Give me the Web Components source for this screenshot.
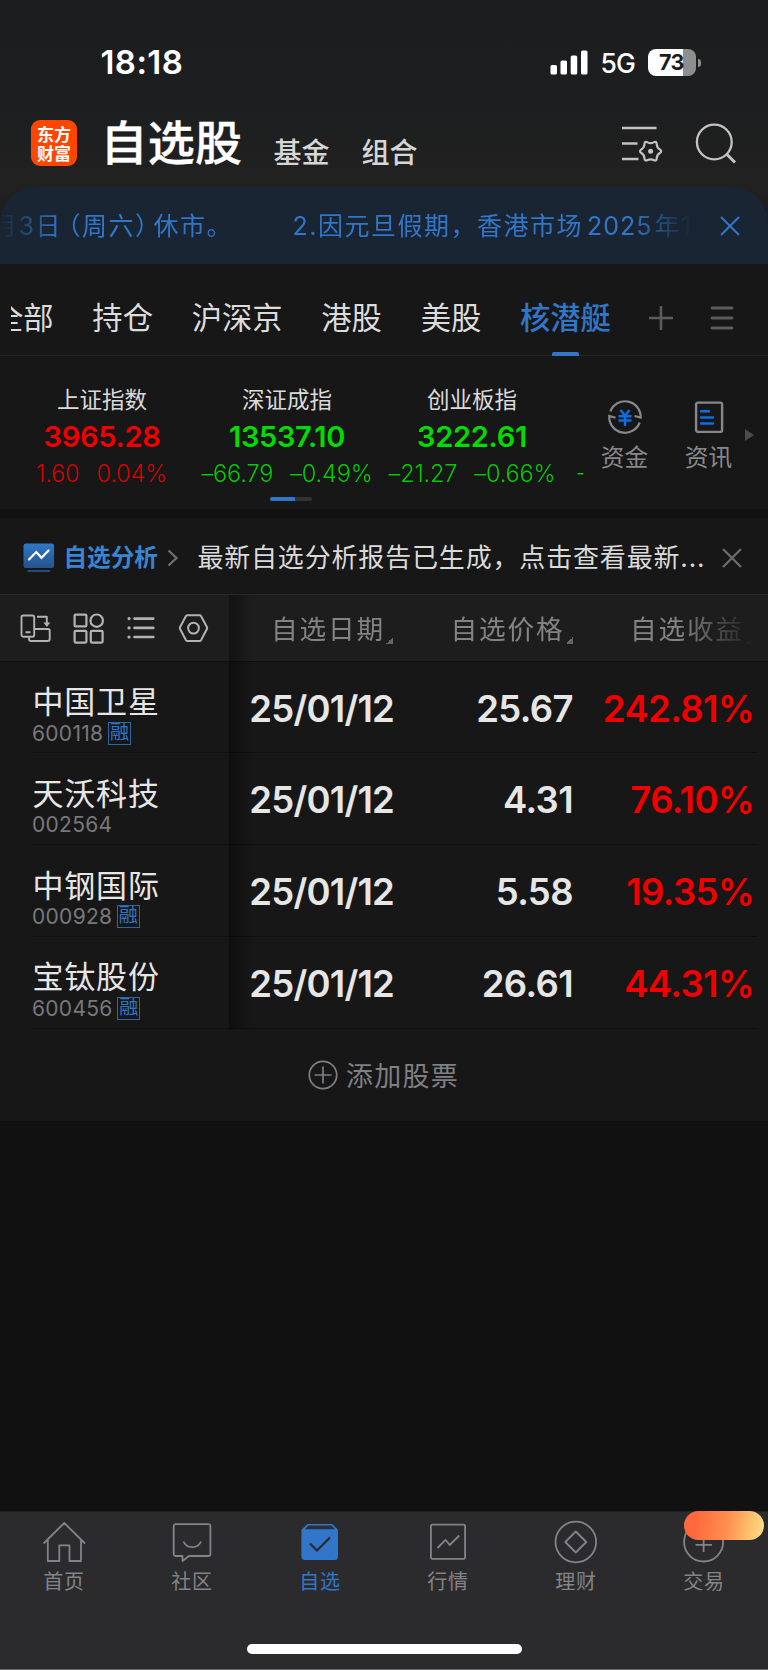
<!DOCTYPE html>
<html lang="zh-CN">
<head>
<meta charset="UTF-8">
<meta name="viewport" content="width=device-width, initial-scale=1">
<title>自选股</title>
<style>
  body {
    margin: 0;
    background: #111111;
    color: #e6e6e6;
    font-family: Inter, 'Noto Sans CJK SC', sans-serif;
    --c-blue: #3176c8;
    --c-red: #f00000;
    --c-green: #00dc00;
    --c-panel: #171717;
    --c-muted: #88888c;
  }
</style>
</head>
<body>
<watch-app></watch-app>

<script>
const ICONS = {
    filter: { w: 42, h: 42, svg: `<g fill="none" stroke="#c4c2c2" stroke-width="2.6"><path d="M1 5H35.500M1 20.500H16.500M1 36H17.500"/><path transform="translate(29.600 28.200) scale(.96)" stroke-width="2.300" d="M9.550 1.900Q6.600 3.800 6.400 7.300Q6.250 10.800 3.100 9.200Q0 7.600 -3.100 9.200Q-6.250 10.800 -6.400 7.300Q-6.600 3.800 -9.550 1.900Q-12.500 0 -9.550 -1.900Q-6.600 -3.800 -6.400 -7.300Q-6.250 -10.800 -3.100 -9.200Q0 -7.600 3.100 -9.200Q6.250 -10.800 6.400 -7.300Q6.600 -3.800 9.550 -1.900Q12.500 0 9.550 1.900Z"/></g><circle cx="29.600" cy="28.200" r="2.500" fill="#c4c2c2"/>` },
    search: { w: 42, h: 42, svg: `<g fill="none" stroke="#c4c2c2" stroke-width="2.300"><circle cx="19.300" cy="19" r="17.400"/><path stroke-width="3" d="M31.500 31L40 39.500"/></g>` },
    close: { w: 20, h: 20, svg: `<path d="M1 1L19 19M19 1L1 19" fill="none" stroke="currentColor" stroke-width="var(--sw, 2)"/>` },
    plus: { w: 26, h: 26, svg: `<path d="M13 1V25M1 13H25" fill="none" stroke="#5c5c5c" stroke-width="2.600"/>` },
    menu: { w: 24, h: 24, svg: `<path d="M2 2H22M2 12H22M2 22H22" fill="none" stroke="#5c5c5c" stroke-width="2.800" stroke-linecap="round"/>` },
    funds: { w: 36, h: 36, svg: `<g fill="none" stroke="#87878b" stroke-width="2.200"><path d="M3.300 12.500A15.700 15.700 0 0 1 33.700 18.500L27.500 17"/><path d="M32.700 23.500A15.700 15.700 0 0 1 2.300 17L8.500 18.700"/></g><path d="M13.500 11L18 16.500L22.500 11M11.500 17.300H24.500M11.500 21.500H24.500M18 16V27" fill="none" stroke="#0a6ee6" stroke-width="2.400"/>` },
    news: { w: 30, h: 34, svg: `<rect x="2.100" y="2.600" width="26" height="29.300" rx="2" fill="none" stroke="#87878b" stroke-width="2.400"/><path d="M7 11.200H15M7 17.500H19M7 23.500H19" fill="none" stroke="#0a6ee6" stroke-width="2.400" stroke-linecap="round"/>` },
    analysis: { w: 32, h: 30, svg: `<defs><linearGradient id="g" x1="0" y1="0" x2="0" y2="1"><stop offset="0" stop-color="#2f78c8"/><stop offset="1" stop-color="#26528a"/></linearGradient></defs><rect x=".5" y=".5" width="30.600" height="24.500" rx="2.500" fill="url(#g)"/><path d="M6 16.500L13.300 9L18.500 14.800L25.500 7.500" fill="none" stroke="#fff" stroke-width="2.200" stroke-linecap="round"/><path d="M5.500 28H26.500" stroke="#234a78" stroke-width="2.200" stroke-linecap="round"/>` },
    chevron: { w: 12, h: 18, svg: `<path d="M1.500 1.500L9.500 9L1.500 16.500" fill="none" stroke="#717171" stroke-width="2.200"/>` },
    rotate: { w: 31, h: 30, svg: `<g fill="none" stroke="#b4b2b2" stroke-width="1.900" stroke-linejoin="round"><rect x="1.500" y="2.500" width="12.700" height="21.200" rx="1.800"/><path d="M5.500 19.300H10.500M17 3.800H26.800V10"/><path d="M15 16H28a1.700 1.700 0 0 1 1.700 1.700V26a2 2 0 0 1-2 2H11a2 2 0 0 1-2-2V24.500"/></g><path d="M23.500 9.500H30.300L26.900 14Z" fill="#b4b2b2"/>` },
    grid: { w: 31, h: 31, svg: `<g fill="none" stroke="#b4b2b2" stroke-width="2.200"><rect x="1.600" y="1.600" width="11.800" height="11.800" rx="1"/><circle cx="23.700" cy="7.700" r="6.200"/><rect x="1.600" y="17.800" width="11.800" height="11.800" rx="1"/><rect x="17.800" y="17.800" width="11.800" height="11.800" rx="1"/></g>` },
    list: { w: 28, h: 24, svg: `<g fill="none" stroke="#b4b2b2" stroke-width="2.600" stroke-linecap="round"><path d="M7.500 2.600H26.300M7.500 11.900H26.300M7.500 21H26.300"/><path stroke-width="3.200" d="M2 2.600H2.100M2 11.900H2.100M2 21H2.100"/></g>` },
    hexagon: { w: 31, h: 30, svg: `<g fill="none" stroke="#b4b2b2" stroke-width="2" stroke-linejoin="round"><path d="M9.500 2.200H21.500Q22.500 2.200 23 3L28.900 14Q29.400 15 28.900 16L23 27.200Q22.500 28 21.500 28H9.500Q8.500 28 8 27.200L2.100 16Q1.600 15 2.100 14L8 3Q8.500 2.200 9.500 2.200Z"/><circle cx="15.500" cy="15.100" r="5.400"/></g>` },
    add: { w: 30, h: 30, svg: `<g fill="none" stroke="#7f7f84" stroke-width="1.700"><circle cx="15" cy="15" r="13.700"/><path d="M15 6.500V23.500M6.500 15H23.500"/></g>` },
    home: { w: 44, h: 44, svg: `<g fill="none" stroke="#838388" stroke-width="1.800" stroke-linejoin="round"><path d="M1.500 23.500L22.300 3L43 23.500M5.800 20V41H17.300V25.300H27.500V41H39V20"/></g>` },
    community: { w: 44, h: 44, svg: `<g fill="none" stroke="#838388" stroke-width="1.800" stroke-linejoin="round"><path d="M5.700 4.200H38.400a2 2 0 0 1 2 2V34a2 2 0 0 1-2 2H19L12.500 41V36H5.700a2 2 0 0 1-2-2V6.200a2 2 0 0 1 2-2Z"/><path d="M13.500 21.500C16.500 29 28 29 31 21.500"/></g>` },
    favorite: { w: 44, h: 44, svg: `<path d="M9.500 4H34.200L40 9.700V36.500a3.500 3.500 0 0 1-3.500 3.500H6.900a3.500 3.500 0 0 1-3.500-3.500V9.700Z" fill="#3176c8"/><path d="M10.500 5.500H33.300L37 9.300H6.800Z" fill="#29303a"/><path d="M12 23.500L19 30.500L32 17.500" fill="none" stroke="#2b2b2d" stroke-width="2.200"/>` },
    market: { w: 44, h: 44, svg: `<g fill="none" stroke="#838388" stroke-width="1.800" stroke-linejoin="round"><rect x="4.900" y="4.700" width="34.200" height="34.200" rx="1.500"/><path d="M11.500 28L19.500 19.800L23.700 25L33.300 15.500"/></g>` },
    wealth: { w: 44, h: 44, svg: `<g fill="none" stroke="#838388" stroke-width="1.800" stroke-linejoin="round"><circle cx="21.800" cy="22" r="20.300"/><path d="M21.800 11.500L32.300 22L21.800 32.500L11.300 22Z"/></g>` },
    trade: { w: 44, h: 44, svg: `<g fill="none" stroke="#838388" stroke-width="1.800"><circle cx="21.600" cy="22" r="19.500"/><path d="M21.600 15V32M13.500 24.800H30"/></g>` }
};

class WatchIcon extends HTMLElement {
    constructor() {
        super();
        this.attachShadow({ mode: 'open' });
    }

    connectedCallback() {
        const icon = ICONS[this.getAttribute('name')];
        this.shadowRoot.innerHTML = `
      <style>
        :host { display: block; flex: none; }
        svg { display: block; }
      </style>
      <svg width="${icon.w}" height="${icon.h}" viewBox="0 0 ${icon.w} ${icon.h}">${icon.svg}</svg>
    `;
    }
}

class StatusBar extends HTMLElement {
    constructor() {
        super();
        this.attachShadow({ mode: 'open' });
        this.shadowRoot.innerHTML = `
      <style>
        :host {
          display: flex;
          justify-content: space-between;
          box-sizing: border-box;
          height: 112px;
          padding: 42px 67px 0 100.5px;
          color: #fff;
        }
        .time { font-size: 33px; font-weight: 600; line-height: 41px; letter-spacing: 0.4px; }
        .right { display: flex; height: 41px; align-items: center; }
        .net { font-size: 26.5px; font-weight: 500; margin: 0 13px 0 12px; letter-spacing: -0.8px; line-height: 40px; }
        .battery {
          width: 48px;
          height: 27px;
          border-radius: 8px;
          background: linear-gradient(90deg, #fff 35px, #8e8e8f 35px);
          color: #1d1d1f;
          font-size: 21.5px;
          font-weight: 700;
          line-height: 27px;
          text-align: center;
          text-indent: -1.5px;
          letter-spacing: -0.8px;
        }
        .nub { width: 3px; height: 8px; margin-left: 2px; border-radius: 0 4px 4px 0; background: #8e8e8f; }
      </style>
      <div class="time">18:18</div>
      <div class="right">
        <svg width="38" height="25" viewBox="0 0 38 25" fill="#fff">
          <rect x="0.500" y="15" width="6.500" height="9.500" rx="1.600"/>
          <rect x="10.500" y="10.500" width="6.500" height="14" rx="1.600"/>
          <rect x="20.700" y="5.500" width="6.500" height="19" rx="1.600"/>
          <rect x="31" y="0.500" width="6.500" height="24" rx="1.600"/>
        </svg>
        <span class="net">5G</span>
        <span class="battery">73</span>
        <span class="nub"></span>
      </div>
    `;
    }
}

class AppHeader extends HTMLElement {
    constructor() {
        super();
        this.attachShadow({ mode: 'open' });
        this.shadowRoot.innerHTML = `
      <style>
        :host {
          display: flex;
          height: 75px;
          padding: 0 31px 0 31px;
          align-items: flex-start;
        }
        .logo {
          box-sizing: border-box;
          width: 46px;
          height: 46px;
          margin-top: 8px;
          padding: 3.5px 5px;
          border-radius: 9px;
          background: #ff4600;
          color: #fff;
          font: 700 17px/19px 'Noto Sans CJK SC', sans-serif;
          text-align: center;
        }
        h1 { margin: 6px 0 0 23.5px; font-size: 47px; font-weight: 500; line-height: 50px; letter-spacing: 0.3px; color: #fff; -webkit-text-stroke: 0.4px #fff; }
        .link { margin: 23px 0 0 32px; font-size: 28px; font-weight: 500; line-height: 36px; color: #d6d6d6; }
        .link:first-of-type { margin-left: 31px; }
        .actions { display: flex; gap: 32px; margin: 11px 0 0 auto; }
      </style>
      <div class="logo">东方财富</div>
      <h1>自选股</h1>
      <span class="link">基金</span>
      <span class="link">组合</span>
      <div class="actions">
        <watch-icon name="filter"></watch-icon>
        <watch-icon name="search"></watch-icon>
      </div>
    `;
    }
}

class NoticeBar extends HTMLElement {
    constructor() {
        super();
        this.attachShadow({ mode: 'open' });
        this.shadowRoot.innerHTML = `
      <style>
        :host {
          display: flex;
          align-items: center;
          height: 77px;
          padding-right: 28px;
          border-radius: 36px 36px 0 0;
          background: #1a2533;
          color: var(--c-blue);
        }
        .scroll {
          display: flex;
          width: 692px;
          overflow: hidden;
          white-space: nowrap;
          font-size: 25px;
          letter-spacing: 1.5px;
          line-height: 40px;
          -webkit-mask-image: linear-gradient(90deg, transparent, #000 60px, #000 630px, transparent 692px);
          mask-image: linear-gradient(90deg, transparent, #000 60px, #000 630px, transparent 692px);
        }
        .first { width: 236px; margin-left: -8px; }
        .second { margin-left: 64.5px; }
        /* half-width forms of the fullwidth brackets */
        .open, .close { font-feature-settings: 'halt'; }
        .open { margin-left: 6px; }
        .close { margin-right: 4.5px; }
        .year { margin: 0 2px 0 4px; letter-spacing: 1px; }
        watch-icon { margin-left: auto; }
      </style>
      <div class="scroll">
        <span class="first">月3日<span class="open">（</span>周六<span class="close">）</span>休市。</span>
        <span class="second">2.因元旦假期，香港市场<span class="year">2025</span>年1</span>
      </div>
      <watch-icon name="close"></watch-icon>
    `;
    }
}

class GroupTabs extends HTMLElement {
    constructor() {
        super();
        this.attachShadow({ mode: 'open' });
        this.shadowRoot.innerHTML = `
      <style>
        :host {
          display: flex;
          align-items: center;
          box-sizing: border-box;
          height: 92px;
          padding: 0 34px 0 11px;
          border-bottom: 1px solid #262626;
          background: var(--c-panel);
        }
        .tabs { display: flex; gap: 38.75px; overflow: hidden; height: 92px; white-space: nowrap; }
        .tab { font-size: 30.3px; line-height: 108px; color: #dcdcdc; }
        .tab:first-child { margin-left: -18px; }
        .active { position: relative; color: var(--c-blue); font-weight: 500; }
        .active::after {
          content: '';
          position: absolute;
          left: 50%;
          top: 88px;
          width: 27px;
          height: 4px;
          margin-left: -13.5px;
          border-radius: 2px 2px 0 0;
          background: var(--c-blue);
        }
        .tools { display: flex; align-items: center; gap: 36px; margin: 16px 0 0 auto; }
      </style>
      <div class="tabs">
        ${['全部', '持仓', '沪深京', '港股', '美股'].map(t => `<span class="tab">${t}</span>`).join('')}
        <span class="tab active">核潜艇</span>
      </div>
      <div class="tools">
        <watch-icon name="plus"></watch-icon>
        <watch-icon name="menu"></watch-icon>
      </div>
    `;
    }
}

class IndexQuote extends HTMLElement {
    constructor() {
        super();
        this.attachShadow({ mode: 'open' });
    }

    connectedCallback() {
        this.shadowRoot.innerHTML = `
      <style>
        :host {
          display: flex;
          flex-direction: column;
          align-items: center;
          width: 185px;
          flex: none;
          color: var(--c-green);
          white-space: nowrap;
        }
        :host([up]) { color: var(--c-red); }
        .name { color: #dadada; font-size: 22.5px; line-height: 32px; }
        .value { font-size: 29px; font-weight: 600; line-height: 42px; letter-spacing: -0.3px; }
        .change { display: flex; gap: 17px; font-size: 23.5px; font-weight: 300; line-height: 32px; letter-spacing: -0.15px; opacity: 0.92; }
      </style>
      <span class="name"><slot></slot></span>
      <span class="value">${this.getAttribute('value')}</span>
      <span class="change"><span>${this.getAttribute('change')}</span><span>${this.getAttribute('percent')}</span></span>
    `;
    }
}

class IndexStrip extends HTMLElement {
    constructor() {
        super();
        this.attachShadow({ mode: 'open' });
        this.shadowRoot.innerHTML = `
      <style>
        :host {
          display: flex;
          box-sizing: border-box;
          height: 153px;
          padding: 28px 10px 0 9.5px;
          background: var(--c-panel);
        }
        .quotes { display: flex; flex: none; flex-wrap: wrap; width: 573px; align-content: flex-start; }
        .more { width: 6px; margin: 77px 0 0 12px; color: var(--c-green); font-size: 17px; line-height: 24px; }
        .pager { width: 42px; height: 4px; margin: 7px 0 0 260.5px; border-radius: 2px; background: linear-gradient(90deg, var(--c-blue) 25px, #333 25px); }
        .shortcut { display: flex; flex: none; flex-direction: column; align-items: center; width: 84px; color: var(--c-muted); font-size: 23.7px; line-height: 34px; }
        .shortcut watch-icon { display: flex; align-items: center; height: 36px; margin: 15px 0 6px; }
        .arrow { width: 0; height: 0; margin: 45px 0 0 -5.5px; border: solid transparent; border-width: 6px 0 6px 9px; border-left-color: #4b4b4b; }
      </style>
      <div class="quotes">
        <index-quote up value="3965.28" change="1.60" percent="0.04%">上证指数</index-quote>
        <index-quote value="13537.10" change="–66.79" percent="–0.49%">深证成指</index-quote>
        <index-quote value="3222.61" change="–21.27" percent="–0.66%">创业板指</index-quote>
        <span class="more">-</span>
        <div class="pager"></div>
      </div>
      <div class="shortcut"><watch-icon name="funds"></watch-icon>资金</div>
      <div class="shortcut"><watch-icon name="news"></watch-icon>资讯</div>
      <div class="arrow"></div>
    `;
    }
}

class AnalysisBanner extends HTMLElement {
    constructor() {
        super();
        this.attachShadow({ mode: 'open' });
        this.shadowRoot.innerHTML = `
      <style>
        :host {
          display: flex;
          align-items: center;
          box-sizing: border-box;
          height: 77px;
          margin-top: 9px;
          padding: 3px 26px 0 22.5px;
          border-bottom: 1px solid #272727;
          background: var(--c-panel);
        }
        .title {
          margin: 0 9px 0 9px;
          font-size: 23.6px;
          font-weight: 700;
          line-height: 36px;
          color: #3a84d4;
        }
        .text { margin-left: 18.5px; padding-top: 1px; font-size: 26px; letter-spacing: 0.83px; line-height: 36px; white-space: nowrap; color: #dadada; }
        watch-icon[name=close] { margin-left: auto; color: #6a6a6a; --sw: 2.4; }
      </style>
      <watch-icon name="analysis"></watch-icon>
      <span class="title">自选分析</span>
      <watch-icon name="chevron"></watch-icon>
      <span class="text">最新自选分析报告已生成，点击查看最新...</span>
      <watch-icon name="close"></watch-icon>
    `;
    }
}

class StockRow extends HTMLElement {
    constructor() {
        super();
        this.attachShadow({ mode: 'open' });
    }

    connectedCallback() {
        const get = name => this.getAttribute(name);
        this.shadowRoot.innerHTML = `
      <style>
        :host {
          display: grid;
          grid-template-columns: 198px 164px 180px 1fr;
          box-sizing: border-box;
          height: 91.75px;
          margin: 0 10px 0 31px;
          padding-right: 4px;
          border-bottom: 1px solid #0f0f0f;
        }
        .name { padding-left: 1.5px; font-size: 31px; letter-spacing: 0.8px; line-height: 40px; margin-top: 20.5px; }
        .code { display: flex; align-items: center; gap: 4.5px; height: 22px; padding-left: 1px; color: #78787d; font-size: 21px; letter-spacing: 0.3px; }
        .tag { box-sizing: border-box; width: 23px; height: 23px; border: 1px solid #2b66a8; color: var(--c-blue); font-size: 19px; line-height: 20px; text-align: center; letter-spacing: 0; }
        .num { padding-top: 22px; font-size: 36.5px; font-weight: 600; line-height: 50px; text-align: right; letter-spacing: -0.6px; }
        .date { margin-right: -1px; letter-spacing: -0.8px; }
        .gain { color: var(--c-red); }
      </style>
      <div>
        <div class="name"><slot></slot></div>
        <div class="code">${get('code')}${this.hasAttribute('margin') ? '<span class="tag">融</span>' : ''}</div>
      </div>
      <span class="num date">${get('date')}</span>
      <span class="num">${get('price')}</span>
      <span class="num gain">${get('gain')}</span>
    `;
    }
}

class StockTable extends HTMLElement {
    constructor() {
        super();
        this.attachShadow({ mode: 'open' });
        this.shadowRoot.innerHTML = `
      <style>
        :host { display: block; position: relative; background: var(--c-panel); }
        /* shadow cast by the pinned name column */
        :host::after {
          content: '';
          position: absolute;
          left: 229px;
          top: 0;
          bottom: 0;
          width: 22px;
          background: linear-gradient(90deg, rgba(0,0,0,0.36), rgba(0,0,0,0.28) 35%, transparent);
        }
        .head { display: flex; align-items: center; box-sizing: border-box; height: 66.5px; border-bottom: 1px solid #0f0f0f; background: #1d1d1d; }
        .tools { display: flex; align-items: center; justify-content: space-between; box-sizing: border-box; width: 229px; padding: 1px 20px 0 20px; }
        .tools watch-icon[name=grid] { margin: 0 1px 0 -1px; }
        .cols {
          display: flex;
          flex: 1;
          padding: 2px 0 0 42px;
          gap: 58.5px;
          color: #838383;
          font-size: 26.7px;
          letter-spacing: 1.8px;
          line-height: 40px;
          -webkit-mask-image: linear-gradient(90deg, #000 450px, transparent 525px);
          mask-image: linear-gradient(90deg, #000 450px, transparent 525px);
        }
        .col { display: flex; flex: none; width: 121px; white-space: nowrap; }
        .col::after { content: ''; align-self: flex-end; flex: none; width: 7px; height: 7px; margin: 0 0 5px 1.5px; background: linear-gradient(135deg, transparent 50%, #66666a 50%); }
      </style>
      <div class="head">
        <div class="tools">
          <watch-icon name="rotate"></watch-icon>
          <watch-icon name="grid"></watch-icon>
          <watch-icon name="list"></watch-icon>
          <watch-icon name="hexagon"></watch-icon>
        </div>
        <div class="cols">
          <span class="col">自选日期</span>
          <span class="col">自选价格</span>
          <span class="col">自选收益</span>
        </div>
      </div>
      <slot></slot>
    `;
    }
}

class TabBar extends HTMLElement {
    constructor() {
        super();
        this.attachShadow({ mode: 'open' });
        const items = [
            { icon: 'home', label: '首页' },
            { icon: 'community', label: '社区' },
            { icon: 'favorite', label: '自选', active: true },
            { icon: 'market', label: '行情' },
            { icon: 'wealth', label: '理财' },
            { icon: 'trade', label: '交易', promo: true }
        ];
        this.shadowRoot.innerHTML = `
      <style>
        :host {
          display: flex;
          flex-direction: column;
          align-items: center;
          box-sizing: border-box;
          height: 159px;
          border-top: 1px solid #222224;
          border-bottom: 1px solid #68686a;
          background: #2b2b2d;
        }
        nav { display: grid; grid-template-columns: repeat(6, 1fr); width: 100%; height: 132px; }
        .item { position: relative; display: flex; flex-direction: column; align-items: center; padding-top: 8px; color: #838388; font-size: 20px; letter-spacing: 0.7px; line-height: 30px; }
        .item span { margin-top: 3px; }
        .active { color: var(--c-blue); }
        .promo { position: absolute; left: 44px; top: -1px; width: 80px; height: 29px; border-radius: 15px; background: linear-gradient(100deg, #ff683b 15%, #ff9150 55%, #ffc873 85%, #ffe08c); }
        .home-indicator { width: 275px; height: 10px; border-radius: 5px; background: #fff; }
      </style>
      <nav>
        ${items.map(i => `
          <div class="item${i.active ? ' active' : ''}">
            <watch-icon name="${i.icon}"></watch-icon>
            <span>${i.label}</span>
            ${i.promo ? '<i class="promo"></i>' : ''}
          </div>
        `).join('')}
      </nav>
      <div class="home-indicator"></div>
    `;
    }
}

class WatchApp extends HTMLElement {
    constructor() {
        super();
        this.attachShadow({ mode: 'open' });
    }

    connectedCallback() {
        const stocks = [
            { name: '中国卫星', code: '600118', margin: true, price: '25.67', gain: '242.81%' },
            { name: '天沃科技', code: '002564', price: '4.31', gain: '76.10%' },
            { name: '中钢国际', code: '000928', margin: true, price: '5.58', gain: '19.35%' },
            { name: '宝钛股份', code: '600456', margin: true, price: '26.61', gain: '44.31%' }
        ];
        this.shadowRoot.innerHTML = `
      <style>
        :host { display: flex; flex-direction: column; width: 768px; height: 1670px; overflow: hidden; background: #111; }
        .top { background: linear-gradient(#1c1d1f 0, #1d1e1f 110px, #212121 187px, #171717 264px); }
        .add { display: flex; align-items: center; justify-content: center; box-sizing: border-box; height: 92px; gap: 8px; padding-right: 1px; background: var(--c-panel); color: #7f7f84; font-size: 27px; letter-spacing: 1.3px; line-height: 40px; }
        .add span { padding-top: 4px; }
        tab-bar { margin-top: auto; }
      </style>
      <div class="top">
        <status-bar></status-bar>
        <app-header></app-header>
        <notice-bar></notice-bar>
      </div>
      <group-tabs></group-tabs>
      <index-strip></index-strip>
      <analysis-banner></analysis-banner>
      <stock-table>
        ${stocks.map(s => `<stock-row code="${s.code}" ${s.margin ? 'margin' : ''} date="25/01/12" price="${s.price}" gain="${s.gain}">${s.name}</stock-row>`).join('')}
      </stock-table>
      <div class="add"><watch-icon name="add"></watch-icon><span>添加股票</span></div>
      <tab-bar></tab-bar>
    `;
    }
}

customElements.define('watch-icon', WatchIcon);
customElements.define('status-bar', StatusBar);
customElements.define('app-header', AppHeader);
customElements.define('notice-bar', NoticeBar);
customElements.define('group-tabs', GroupTabs);
customElements.define('index-quote', IndexQuote);
customElements.define('index-strip', IndexStrip);
customElements.define('analysis-banner', AnalysisBanner);
customElements.define('stock-row', StockRow);
customElements.define('stock-table', StockTable);
customElements.define('tab-bar', TabBar);
customElements.define('watch-app', WatchApp);
</script>
</body>
</html>
